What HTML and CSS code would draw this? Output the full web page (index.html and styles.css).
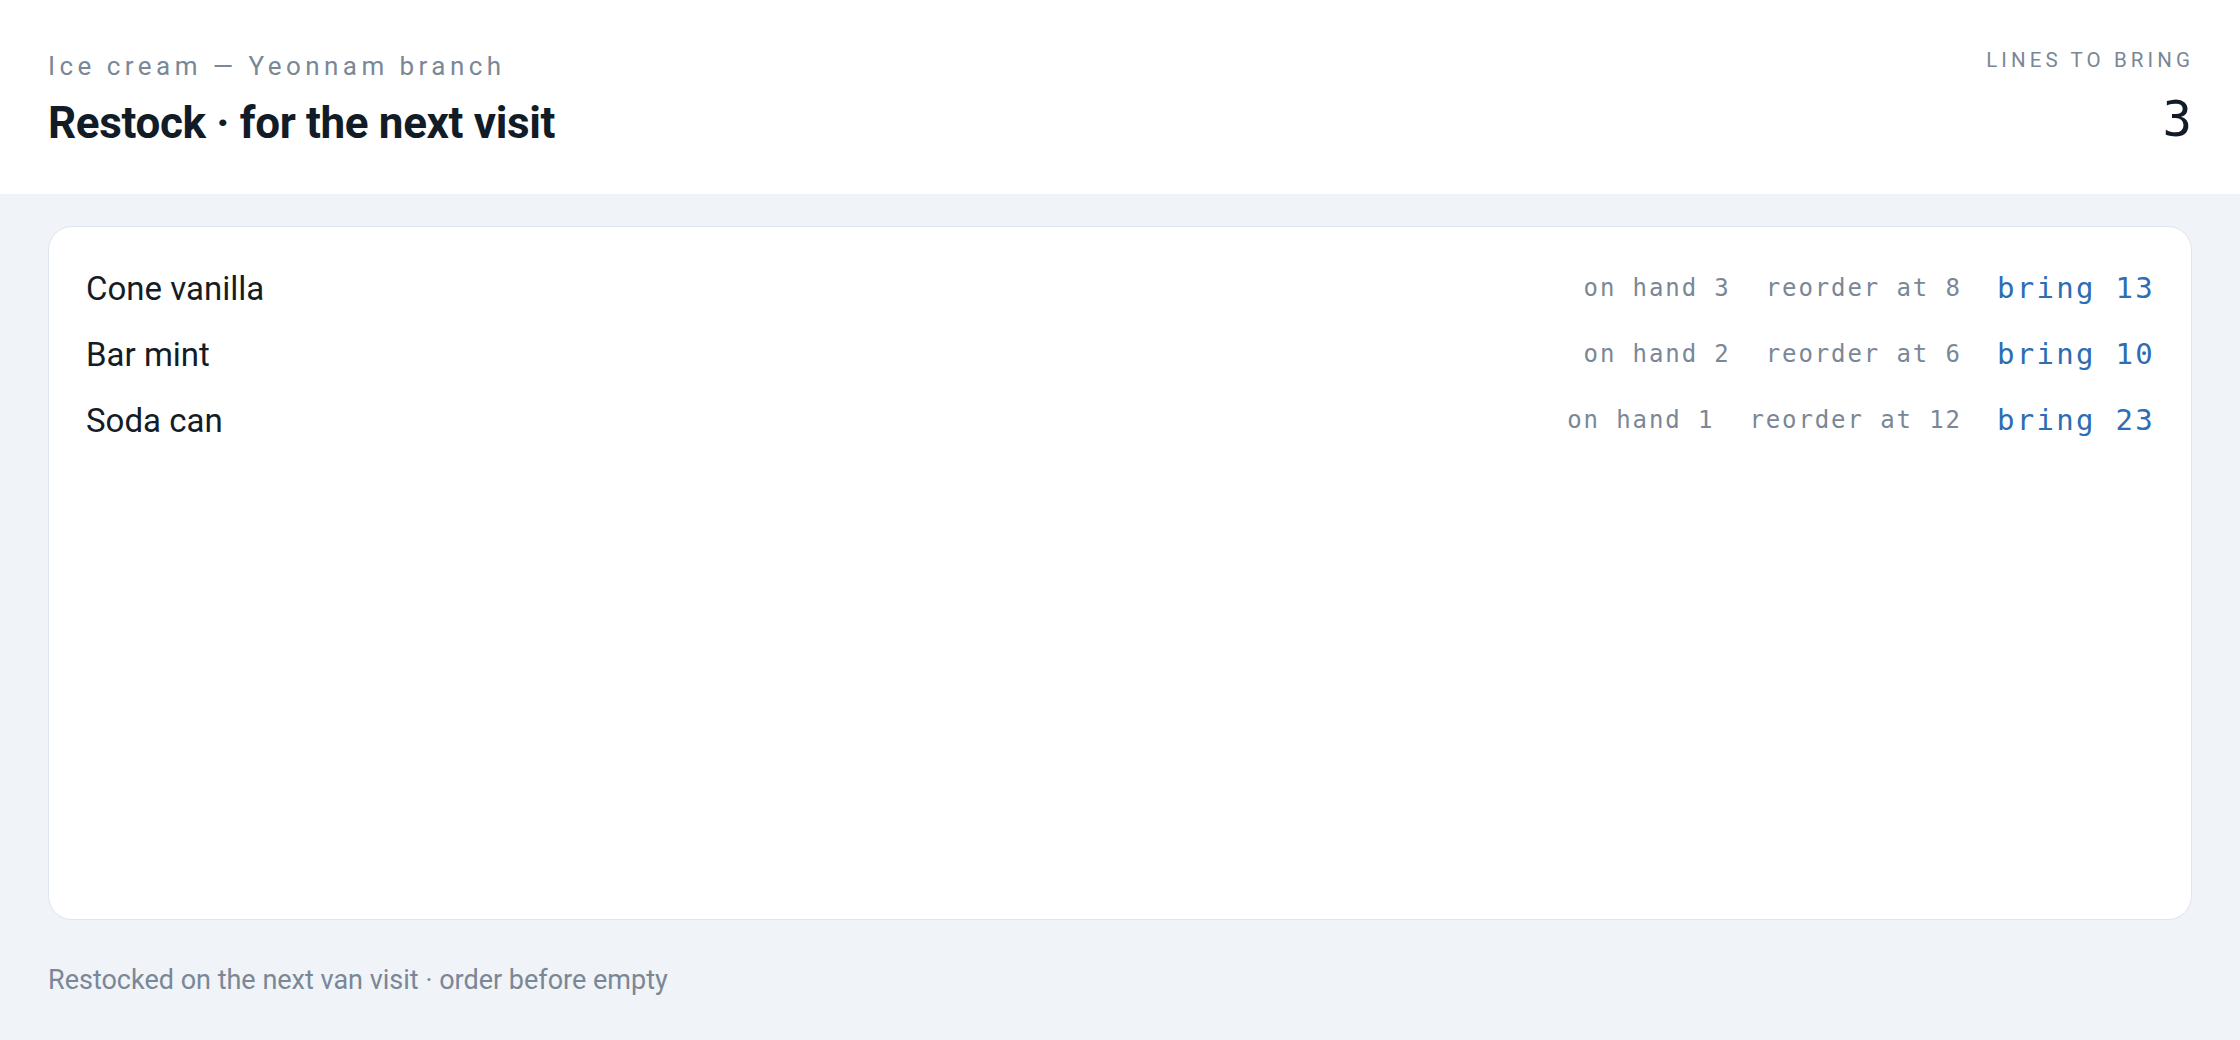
FILE: index.html
```html
<!DOCTYPE html>
<html lang="en">
<head>
<meta charset="utf-8">
<title>Restock</title>
<link rel="stylesheet" href="styles.css">
</head>
<body>
  <header class="top">
    <div class="heading">
      <div class="eyebrow">Ice cream — Yeonnam branch</div>
      <h1 class="title">Restock · for the next visit</h1>
    </div>
    <div class="stat">
      <div class="stat-label">LINES TO BRING</div>
      <div class="stat-value">3</div>
    </div>
  </header>
  <main class="content">
    <section class="card">
      <div class="row">
        <span class="name">Cone vanilla</span>
        <span class="meta">on hand 3</span>
        <span class="meta">reorder at 8</span>
        <span class="bring">bring 13</span>
      </div>
      <div class="row">
        <span class="name">Bar mint</span>
        <span class="meta">on hand 2</span>
        <span class="meta">reorder at 6</span>
        <span class="bring">bring 10</span>
      </div>
      <div class="row">
        <span class="name">Soda can</span>
        <span class="meta">on hand 1</span>
        <span class="meta">reorder at 12</span>
        <span class="bring">bring 23</span>
      </div>
    </section>
  </main>
  <footer class="foot">Restocked on the next van visit · order before empty</footer>
</body>
</html>
```
FILE: styles.css
```css
* { box-sizing: border-box; }
html, body { margin: 0; padding: 0; }
body {
  height: 100vh;
  display: flex;
  flex-direction: column;
  background: #f0f3f7;
  font-family: Roboto, "Liberation Sans", sans-serif;
  color: #141c26;
}
.top {
  height: 194px;
  flex: none;
  background: #ffffff;
  display: flex;
  justify-content: space-between;
  align-items: flex-start;
  padding: 48px 48px 0 48px;
}
.heading { padding-top: 3px; }
.eyebrow {
  font-size: 26px;
  line-height: 31px;
  letter-spacing: 4.45px;
  color: #7a8796;
}
.title {
  margin: 15px 0 0 0;
  font-size: 44px;
  line-height: 52px;
  font-weight: 700;
  letter-spacing: -0.35px;
  color: #121c27;
}
.stat {
  display: flex;
  flex-direction: column;
  align-items: flex-end;
}
.stat-label {
  font-size: 20.5px;
  line-height: 24px;
  letter-spacing: 4.1px;
  margin-right: -2px;
  color: #7a8796;
}
.stat-value {
  margin-top: 20px;
  font-family: "DejaVu Sans Mono", "Liberation Mono", monospace;
  font-size: 49px;
  line-height: 56px;
  color: #121c27;
}
.content {
  flex: 1;
  display: flex;
  flex-direction: column;
  padding: 32px 48px 0 48px;
  min-height: 0;
}
.card {
  flex: 1;
  background: #ffffff;
  border: 1px solid #dfe5ec;
  border-radius: 24px;
  padding: 28px 36px 26px 37px;
}
.row {
  height: 66px;
  display: flex;
  align-items: center;
  gap: 35px;
}
.name {
  flex: 1;
  font-size: 33px;
  color: #141c26;
}
.meta {
  font-family: "DejaVu Sans Mono", "Liberation Mono", monospace;
  font-size: 24px;
  letter-spacing: 1.9px;
  color: #7a8796;
}
.bring {
  font-family: "DejaVu Sans Mono", "Liberation Mono", monospace;
  font-size: 29px;
  letter-spacing: 2.3px;
  color: #2d6db4;
}
.foot {
  height: 120px;
  flex: none;
  display: flex;
  align-items: center;
  padding: 0 48px;
  font-size: 27px;
  color: #7a8796;
}
```
